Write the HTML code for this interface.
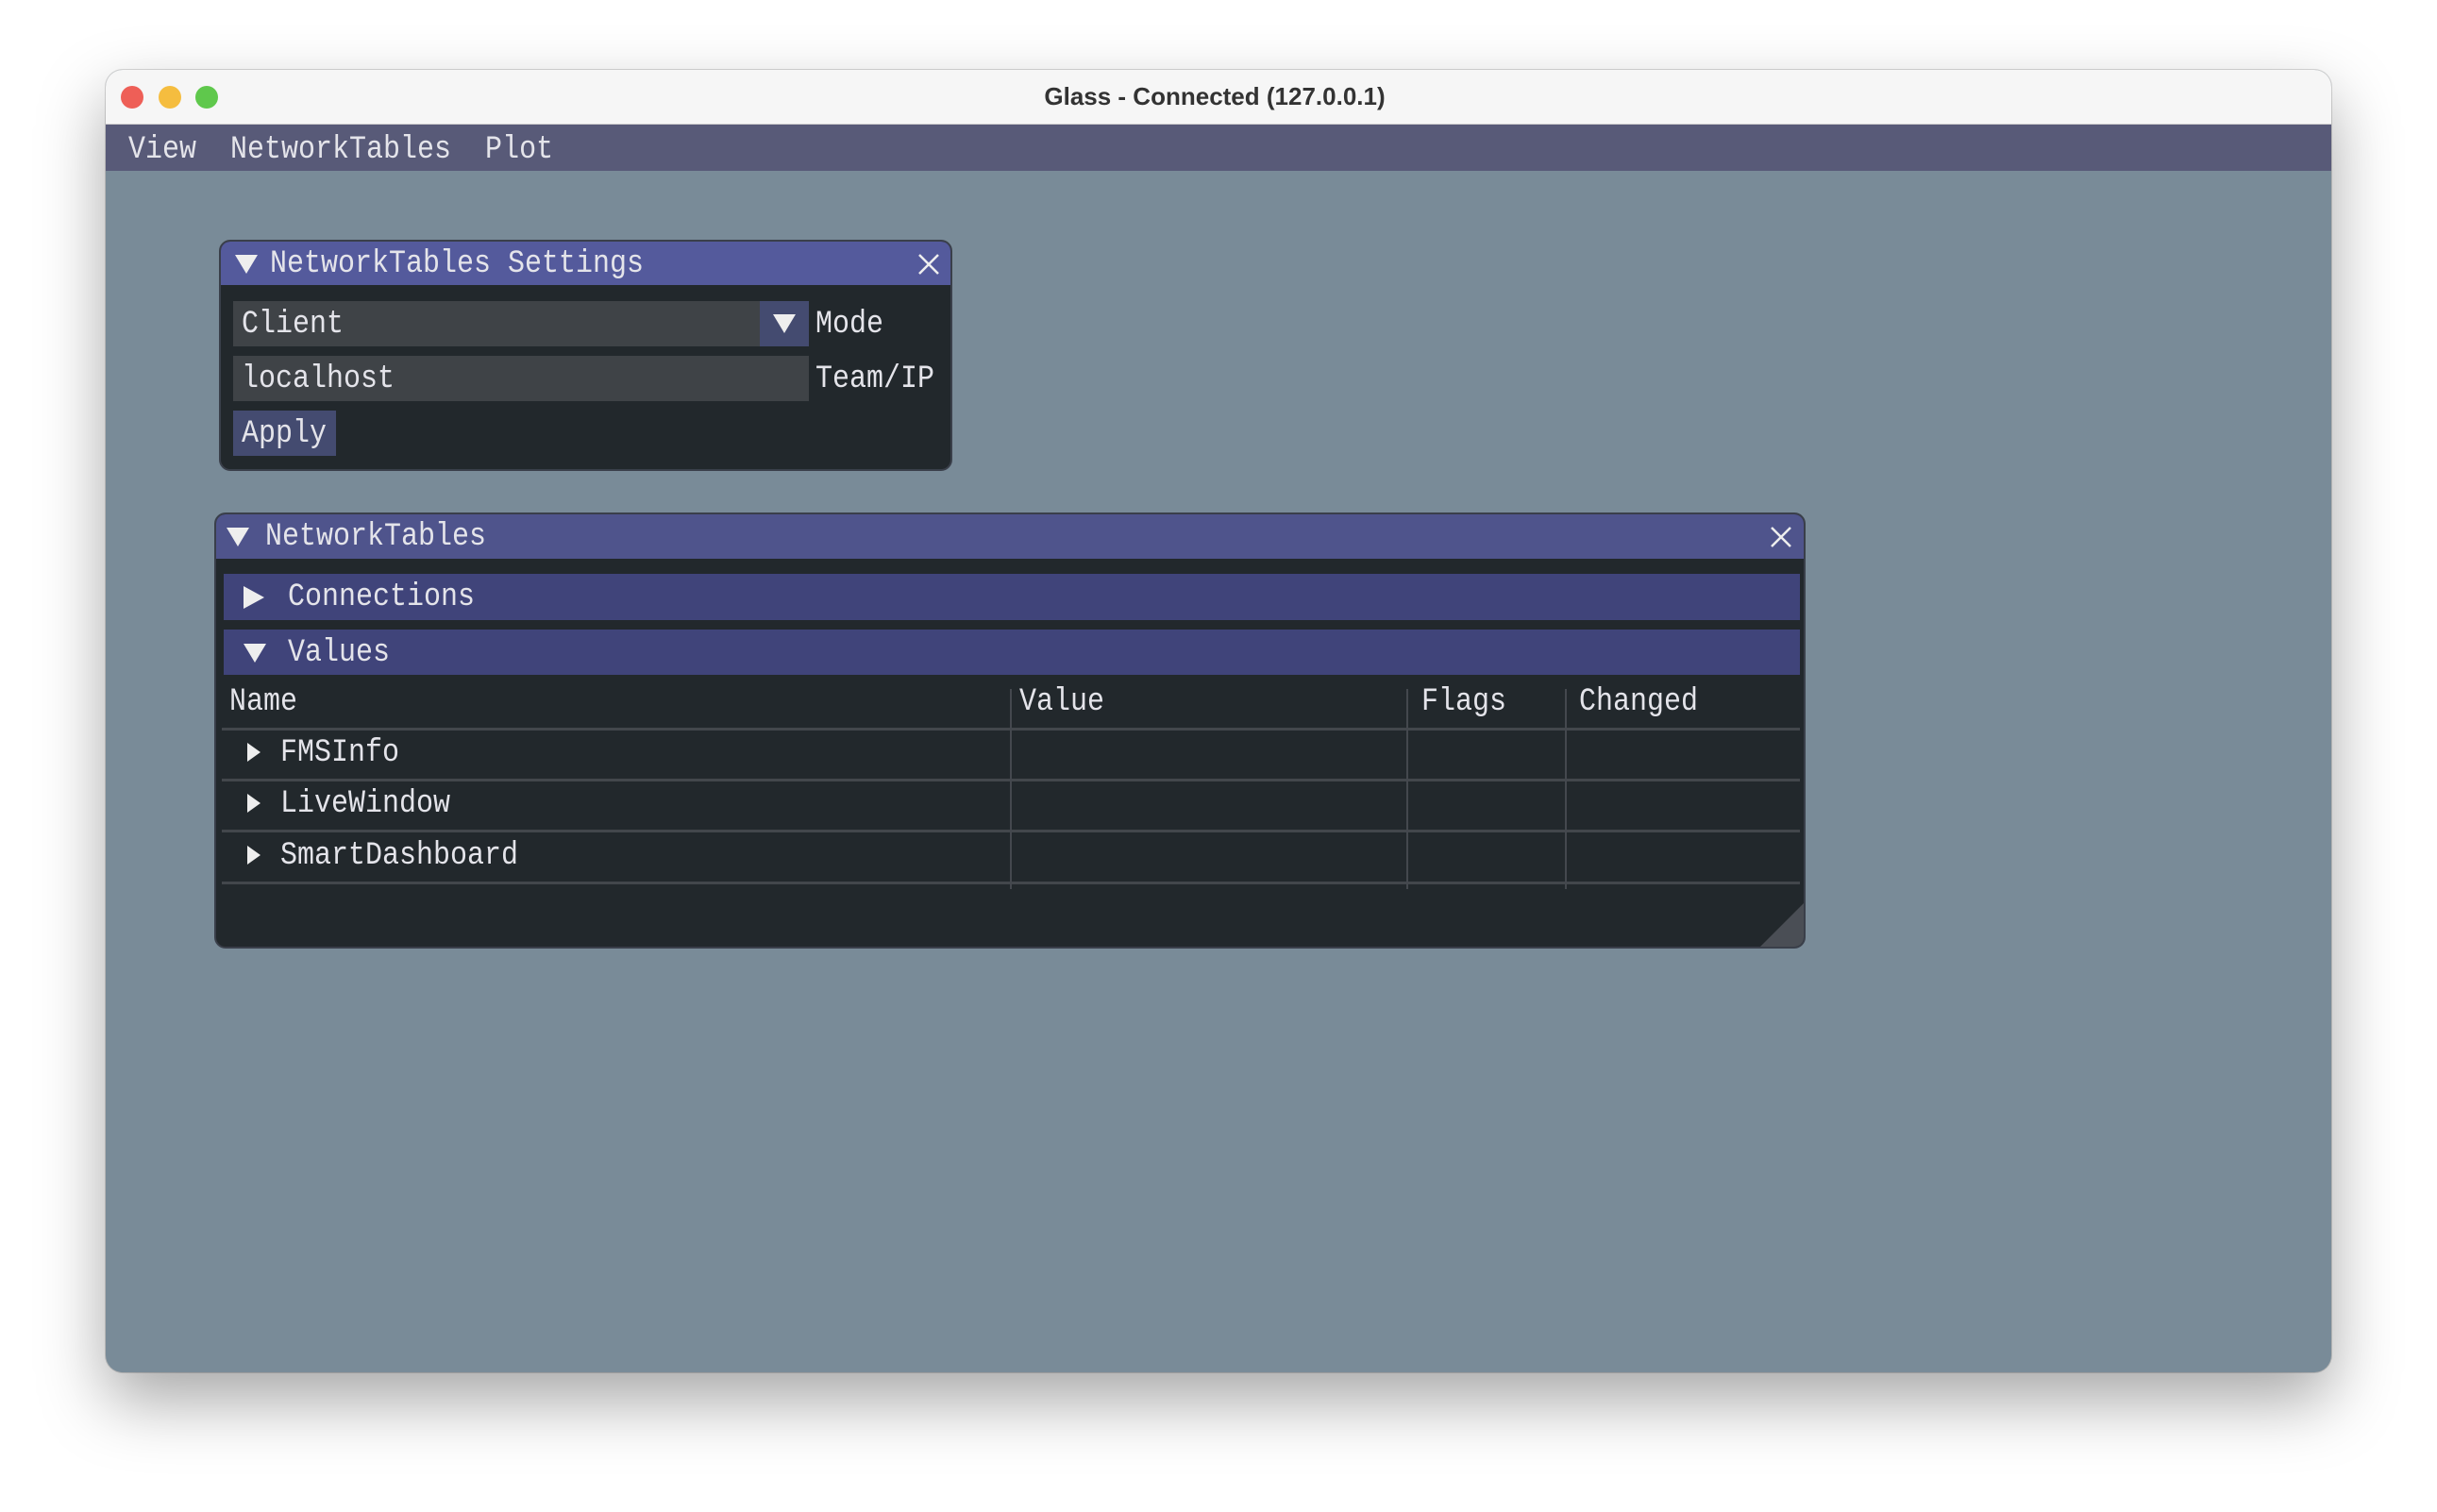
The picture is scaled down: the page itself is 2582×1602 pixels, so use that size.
<!DOCTYPE html>
<html><head><meta charset="utf-8"><style>
*{margin:0;padding:0;box-sizing:border-box}
body{width:2582px;height:1602px;background:#fff;position:relative;overflow:hidden;font-family:"Liberation Mono","DejaVu Sans Mono",monospace;}
.win{position:absolute;left:112px;top:74px;width:2358px;height:1380px;border-radius:18px;overflow:hidden;box-shadow:0 30px 70px rgba(0,0,0,0.35),0 0 0 1px rgba(0,0,0,0.15);background:#798b98}
.tb{position:absolute;left:0;top:0;width:100%;height:58px;background:#f6f6f6;border-bottom:1px solid #d0d0d0}
.dot{position:absolute;top:17px;width:24px;height:24px;border-radius:50%}
.ttl{position:absolute;left:0;width:100%;top:13px;text-align:center;font:bold 26px "Liberation Sans",sans-serif;color:#333;padding-right:8px}
.menu{position:absolute;left:0;top:58px;width:100%;height:49px;background:#585a78;color:#e6e6ec}
.t{position:absolute;font-size:30px;line-height:34px;color:#e4e4ea;white-space:pre;transform:scaleY(1.15);transform-origin:left center}
.abs{position:absolute}
</style></head><body>
<div class="win">
 <div class="tb">
  <div class="dot" style="left:16px;background:#ee5f57"></div>
  <div class="dot" style="left:56px;background:#f5bd3f"></div>
  <div class="dot" style="left:95px;background:#5fc84c"></div>
  <div class="ttl">Glass - Connected (127.0.0.1)</div>
 </div>
 <div class="menu">
  <div class="t" style="left:24px;top:10px">View  NetworkTables  Plot</div>
 </div>
</div>

<!-- Settings window -->
<div class="abs" style="left:232px;top:254px;width:777px;height:245px;background:#22282c;border-radius:12px;border:2px solid #3a3f4a;overflow:hidden">
 <div class="abs" style="left:0;top:0;width:100%;height:46px;background:#545a9c"></div>
 <svg class="abs" style="left:14px;top:12px" width="26" height="24"><polygon points="1,2 25,2 13,22" fill="#eee"/></svg>
 <div class="t" style="left:52px;top:7px">NetworkTables Settings</div>
 <svg class="abs" style="left:738px;top:12px" width="24" height="24"><path d="M2 2L22 22M22 2L2 22" stroke="#eee" stroke-width="2.5"/></svg>
 <div class="abs" style="left:13px;top:63px;width:558px;height:48px;background:#3f4347"></div>
 <div class="abs" style="left:571px;top:63px;width:52px;height:48px;background:#444b70"></div>
 <svg class="abs" style="left:584px;top:76px" width="26" height="22"><polygon points="1,1 25,1 13,21" fill="#eee"/></svg>
 <div class="t" style="left:22px;top:71px">Client</div>
 <div class="t" style="left:630px;top:71px">Mode</div>
 <div class="abs" style="left:13px;top:121px;width:610px;height:48px;background:#3f4347"></div>
 <div class="t" style="left:22px;top:129px">localhost</div>
 <div class="t" style="left:630px;top:129px">Team/IP</div>
 <div class="abs" style="left:13px;top:179px;width:109px;height:48px;background:#444b70"></div>
 <div class="t" style="left:22px;top:187px">Apply</div>
</div>

<!-- NetworkTables window -->
<div class="abs" style="left:227px;top:543px;width:1686px;height:462px;background:#22282c;border-radius:12px;border:2px solid #3a3f4a;overflow:hidden">
 <div class="abs" style="left:0;top:0;width:100%;height:47px;background:#4f548c"></div>
 <svg class="abs" style="left:10px;top:12px" width="26" height="24"><polygon points="1,2 25,2 13,22" fill="#eee"/></svg>
 <div class="t" style="left:52px;top:7px">NetworkTables</div>
 <svg class="abs" style="left:1646px;top:12px" width="24" height="24"><path d="M2 2L22 22M22 2L2 22" stroke="#eee" stroke-width="2.5"/></svg>
 <div class="abs" style="left:8px;top:63px;width:1670px;height:49px;background:#40447a"></div>
 <svg class="abs" style="left:28px;top:75px" width="24" height="26"><polygon points="1,1 23,13 1,25" fill="#eee"/></svg>
 <div class="t" style="left:76px;top:71px">Connections</div>
 <div class="abs" style="left:8px;top:122px;width:1670px;height:48px;background:#40447a"></div>
 <svg class="abs" style="left:28px;top:136px" width="26" height="22"><polygon points="1,1 25,1 13,21" fill="#eee"/></svg>
 <div class="t" style="left:76px;top:130px">Values</div>
 <div class="t" style="left:14px;top:182px">Name</div>
 <div class="t" style="left:851px;top:182px">Value</div>
 <div class="t" style="left:1277px;top:182px">Flags</div>
 <div class="t" style="left:1444px;top:182px">Changed</div>
 <div class="abs" style="left:6px;top:226px;width:1672px;height:3px;background:#43474c"></div>
 <div class="abs" style="left:6px;top:280px;width:1672px;height:3px;background:#43474c"></div>
 <div class="abs" style="left:6px;top:334px;width:1672px;height:3px;background:#43474c"></div>
 <div class="abs" style="left:6px;top:389px;width:1672px;height:3px;background:#43474c"></div>
 <div class="abs" style="left:841px;top:185px;width:2px;height:212px;background:#44484e"></div>
 <div class="abs" style="left:1261px;top:185px;width:2px;height:212px;background:#44484e"></div>
 <div class="abs" style="left:1429px;top:185px;width:2px;height:212px;background:#44484e"></div>
 <svg class="abs" style="left:32px;top:241px" width="16" height="22"><polygon points="1,1 15,11 1,21" fill="#eee"/></svg>
 <div class="t" style="left:68px;top:236px">FMSInfo</div>
 <svg class="abs" style="left:32px;top:295px" width="16" height="22"><polygon points="1,1 15,11 1,21" fill="#eee"/></svg>
 <div class="t" style="left:68px;top:290px">LiveWindow</div>
 <svg class="abs" style="left:32px;top:350px" width="16" height="22"><polygon points="1,1 15,11 1,21" fill="#eee"/></svg>
 <div class="t" style="left:68px;top:345px">SmartDashboard</div>
 <svg class="abs" style="left:1636px;top:410px" width="48" height="48"><polygon points="48,0 48,48 0,48" fill="#4a4e55"/></svg>
</div>
</body></html>
